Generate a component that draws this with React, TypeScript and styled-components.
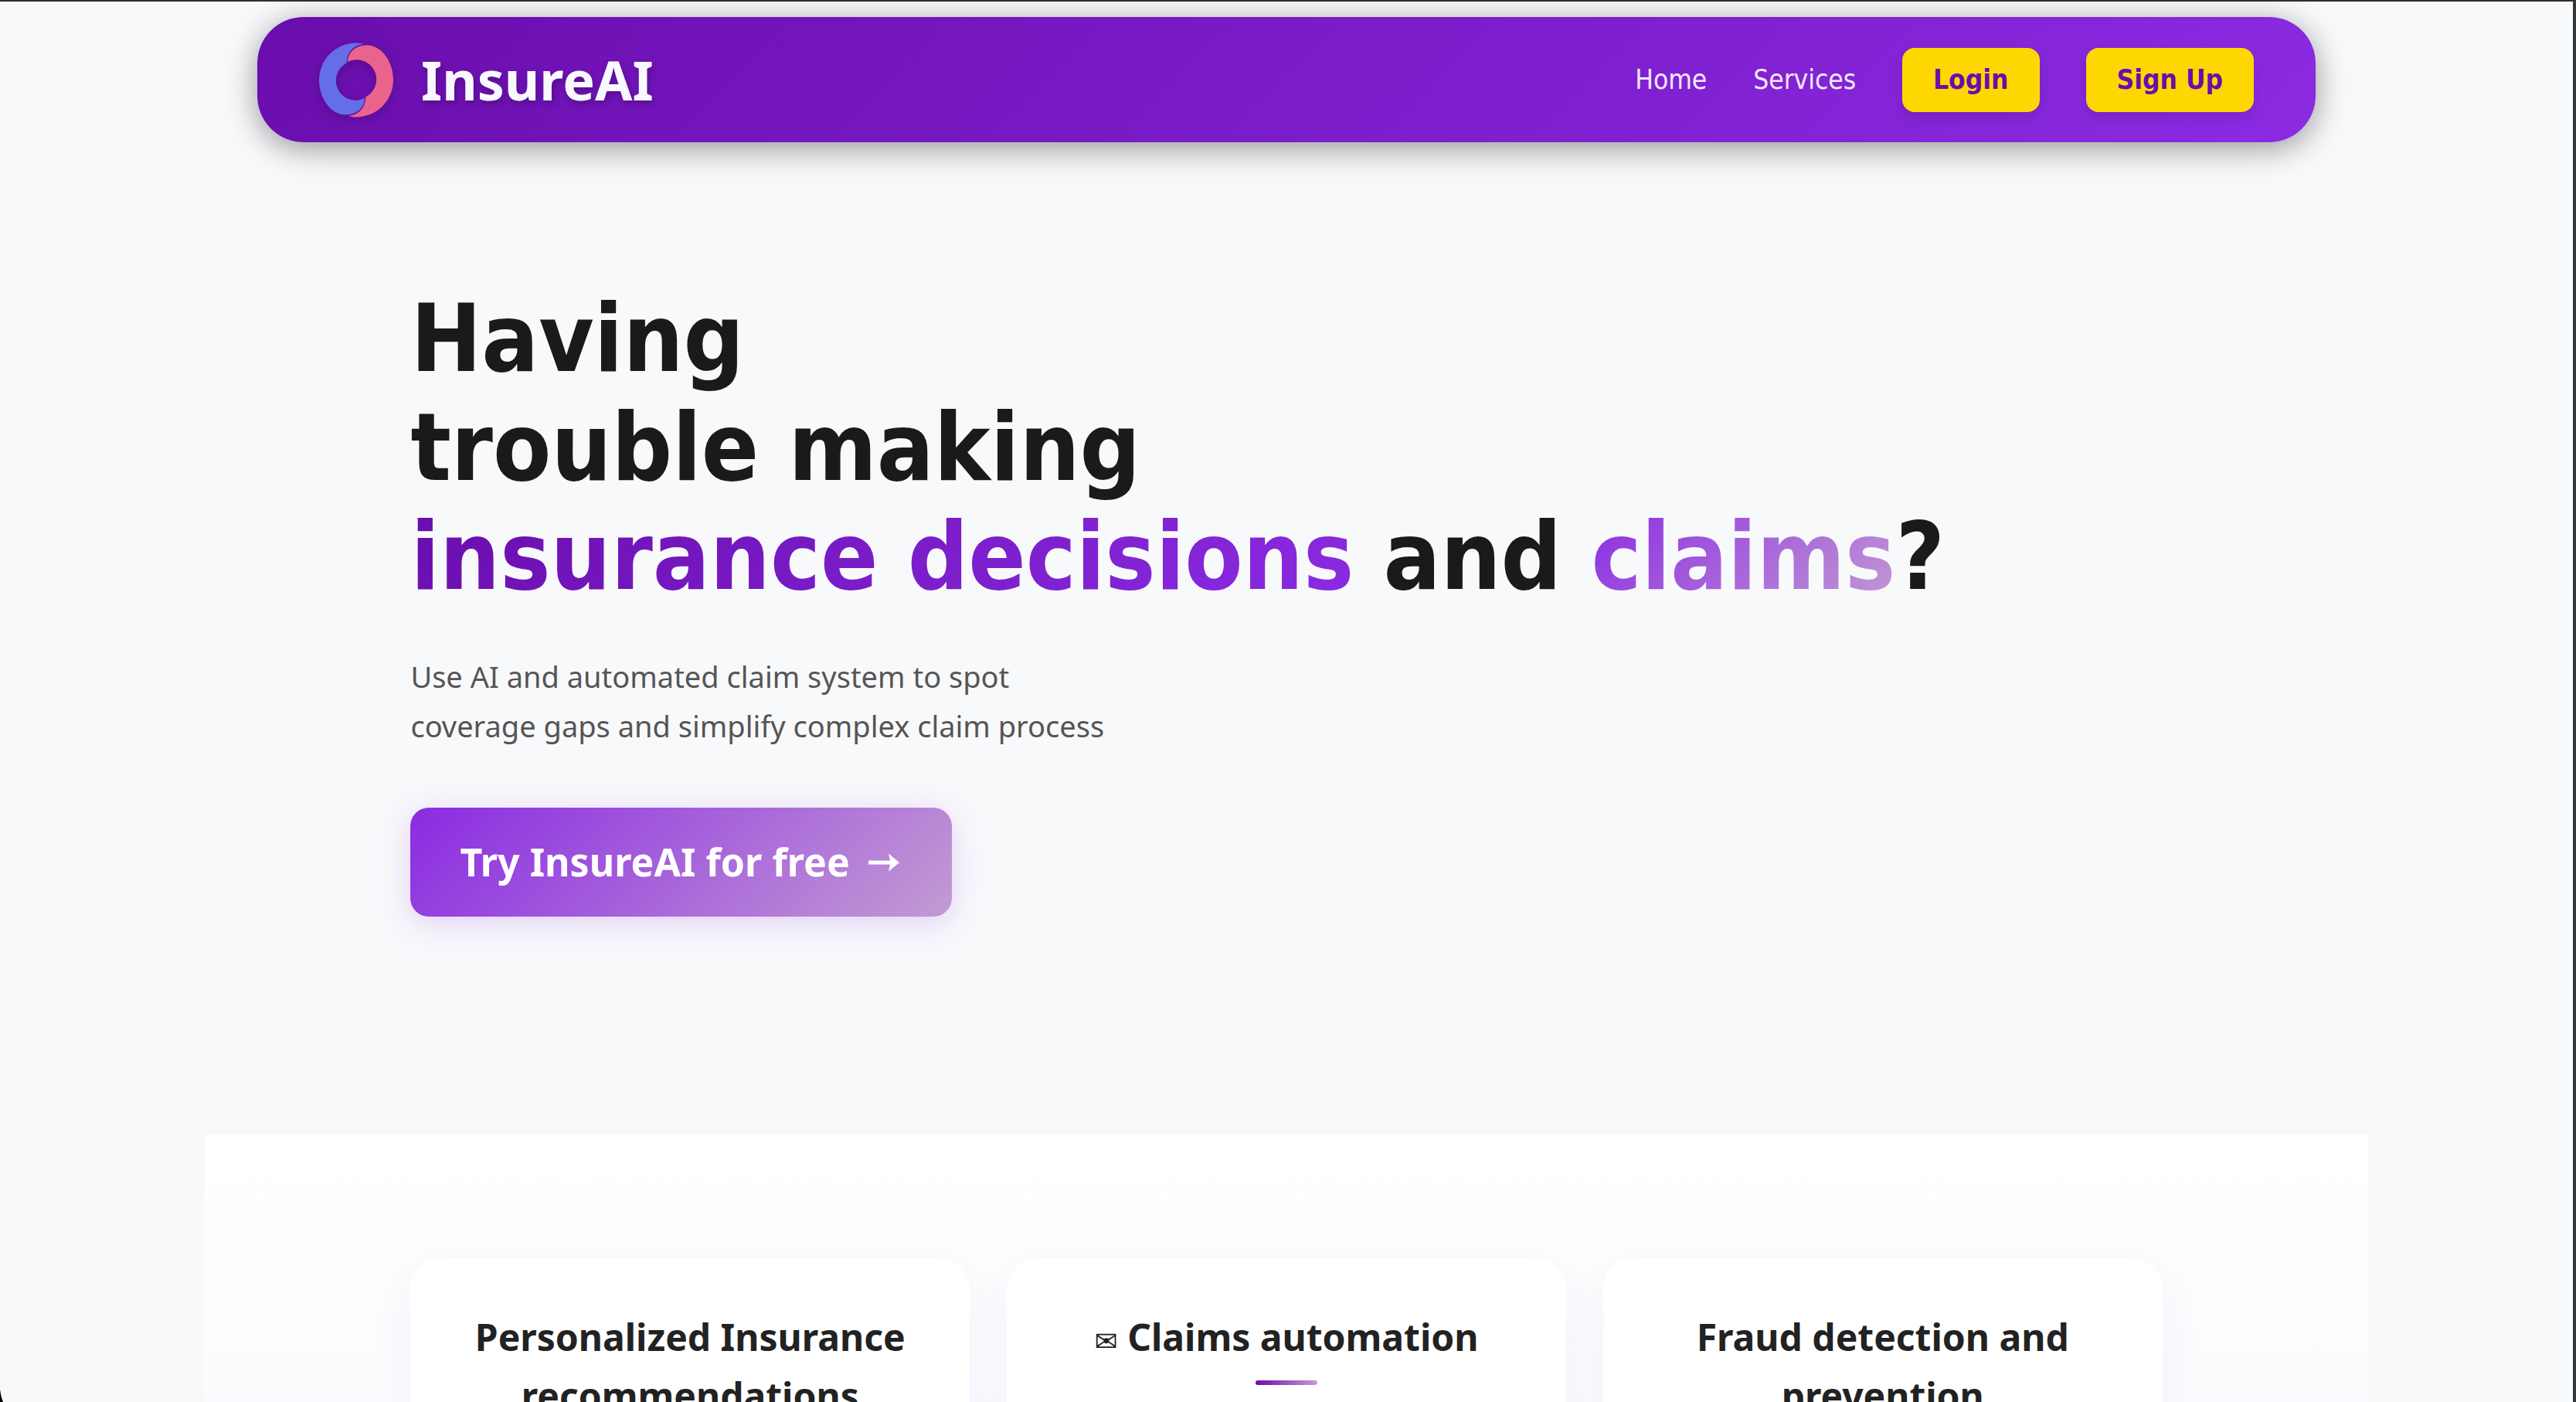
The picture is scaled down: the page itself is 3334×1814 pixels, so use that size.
import React from "react";
import styled, { createGlobalStyle, css } from "styled-components";

const fonts = {
  display: '"DejaVu Sans Condensed", "DejaVu Sans", sans-serif',
  body: '"Noto Sans", "DejaVu Sans", sans-serif',
};

const colors = {
  page: "#f8f9fb",
  ink: "#1a1a1a",
  cardInk: "#222222",
  muted: "#555555",
  purple: "#6a0dad",
  violet: "#8a2be2",
  lilac: "#c39bd3",
  gold: "#ffd700",
};

const GlobalStyle = createGlobalStyle`
  *, *::before, *::after { box-sizing: border-box; }
  body {
    margin: 0;
    background: ${colors.page};
    font-family: ${fonts.body};
    color: ${colors.ink};
  }
`;

const Frame = styled.div`
  height: 100vh;
  overflow-x: hidden;
  overflow-y: auto;
  scrollbar-width: none;
  background: ${colors.page};
  border-top: 2px solid #2d2d2f;
  border-right: 4px solid #35383b;
`;

const FrameCorner = styled.svg`
  position: fixed;
  left: 0;
  bottom: 0;
  width: 4px;
  height: 16px;
`;

const Header = styled.header`
  display: flex;
  align-items: center;
  justify-content: space-between;
  width: 80%;
  margin: 20px auto 0;
  padding: 32px 80px;
  border-radius: 60px;
  background: linear-gradient(135deg, ${colors.purple}, ${colors.violet});
  box-shadow: 0 8px 40px rgba(0, 0, 0, 0.4);
`;

const Brand = styled.a`
  display: flex;
  align-items: center;
  gap: 36px;
  color: #f8f8ff;
  font-size: 70px;
  font-weight: 700;
  line-height: 98px;
  text-decoration: none;
  text-shadow: 2px 4px 8px rgba(0, 0, 0, 0.25);
`;

const LogoMark = styled.svg`
  width: 96px;
  height: 97px;
  overflow: visible;
  filter: drop-shadow(0 4px 8px rgba(0, 0, 0, 0.2));
`;

const Nav = styled.nav`
  display: flex;
  align-items: center;
  gap: 60px;
  font-family: ${fonts.display};
`;

const NavLink = styled.a`
  color: #f5e6ff;
  font-size: 35px;
  line-height: 43px;
  text-decoration: none;
`;

const NavButton = styled.button`
  padding: 20px 40px;
  border: 0;
  border-radius: 16px;
  background: ${colors.gold};
  box-shadow: 0 8px 16px rgba(0, 0, 0, 0.1);
  color: ${colors.purple};
  font-family: inherit;
  font-size: 35px;
  font-weight: 700;
  line-height: 43px;
`;

const column = css`
  width: 100%;
  max-width: 2800px;
  margin: 0 auto;
`;

const Hero = styled.section`
  ${column}
  padding: 184px 8% 282px;
`;

const Headline = styled.h1`
  margin: 0 0 52px;
  font-family: ${fonts.display};
  font-size: 122px;
  font-weight: 700;
  line-height: 141px;
`;

const Highlight = styled.span<{ $from: string; $to: string }>`
  background: linear-gradient(135deg, ${(p) => p.$from}, ${(p) => p.$to});
  background-clip: text;
  -webkit-background-clip: text;
  color: transparent;
`;

const Lead = styled.p`
  margin: 0 0 74px;
  color: ${colors.muted};
  font-size: 38px;
  line-height: 64px;
`;

const CallToAction = styled.button`
  display: inline-flex;
  align-items: center;
  gap: 24px;
  padding: 36px 64px;
  border: 0;
  border-radius: 24px;
  background: linear-gradient(135deg, ${colors.violet}, ${colors.lilac});
  box-shadow: 0 8px 40px rgba(138, 43, 226, 0.2);
  color: #ffffff;
  font-family: inherit;
  font-size: 50px;
  font-weight: 700;
  line-height: 69px;
`;

const Arrow = styled.svg`
  width: 44px;
  height: 24px;
`;

const Features = styled.section`
  ${column}
  display: grid;
  grid-template-columns: repeat(3, minmax(0, 1fr));
  gap: 48px;
  padding: 160px 8%;
  background: linear-gradient(180deg, #ffffff, #f8f8ff);
`;

const Card = styled.article`
  display: flex;
  flex-direction: column;
  align-items: center;
  min-height: 400px;
  padding: 64px;
  border-radius: 40px;
  background: #ffffff;
  box-shadow: 0 16px 60px rgba(60, 30, 140, 0.05);
`;

const CardTitle = styled.h2`
  margin: 0;
  color: ${colors.cardInk};
  font-size: 48px;
  font-weight: 700;
  line-height: 76px;
  text-align: center;
`;

const TitleGlyph = styled.span`
  font-family: "DejaVu Sans", sans-serif;
  font-size: 36px;
  line-height: 1;
`;

const Rule = styled.span`
  width: 80px;
  height: 6px;
  margin-top: 18px;
  border-radius: 4px;
  background: linear-gradient(90deg, ${colors.purple}, ${colors.lilac});
`;

const swirl =
  "M70 14 C67 13 63 12.5 60 12.5 A48 48 0 0 0 12 60.5 C12 84 27 105.5 46 105.5 C60 105.5 71 97 71 84 A25.3 25.3 0 0 1 47.7 38.5 C47.7 25 57 15 70 14 Z";

const features: { title: string; glyph?: string }[] = [
  { title: "Personalized Insurance recommendations" },
  { title: "Claims automation", glyph: "✉" },
  { title: "Fraud detection and prevention" },
];

export default function App() {
  return (
    <Frame>
      <GlobalStyle />
      <Header>
        <Brand href="#home">
          <LogoMark viewBox="12 12 96 97" aria-hidden="true">
            <path d={swirl} fill="#636ee8" />
            <path d={swirl} fill="#ea638c" transform="rotate(180 60 60.5)" />
          </LogoMark>
          InsureAI
        </Brand>
        <Nav>
          <NavLink href="#home">Home</NavLink>
          <NavLink href="#services">Services</NavLink>
          <NavButton type="button">Login</NavButton>
          <NavButton type="button">Sign Up</NavButton>
        </Nav>
      </Header>
      <main>
        <Hero id="home">
          <Headline>
            Having
            <br />
            trouble making
            <br />
            <Highlight $from={colors.purple} $to={colors.violet}>
              insurance decisions
            </Highlight>{" "}
            and{" "}
            <Highlight $from={colors.violet} $to={colors.lilac}>
              claims
            </Highlight>
            ?
          </Headline>
          <Lead>
            Use AI and automated claim system to spot
            <br />
            coverage gaps and simplify complex claim process
          </Lead>
          <CallToAction type="button">
            Try InsureAI for free
            <Arrow viewBox="0 0 44 24" aria-hidden="true">
              <path d="M0 9.5 H28 L26 0.5 L40 12 L26 23.5 L28 14.5 H0 Z" fill="currentColor" />
            </Arrow>
          </CallToAction>
        </Hero>
        <Features id="services">
          {features.map(({ title, glyph }) => (
            <Card key={title}>
              <CardTitle>
                {glyph && <TitleGlyph>{glyph} </TitleGlyph>}
                {title}
              </CardTitle>
              <Rule />
            </Card>
          ))}
        </Features>
      </main>
      <FrameCorner viewBox="0 0 4 16" aria-hidden="true">
        <path d="M0 0 Q1 9 4 16 H0 Z" fill="#000000" />
      </FrameCorner>
    </Frame>
  );
}
